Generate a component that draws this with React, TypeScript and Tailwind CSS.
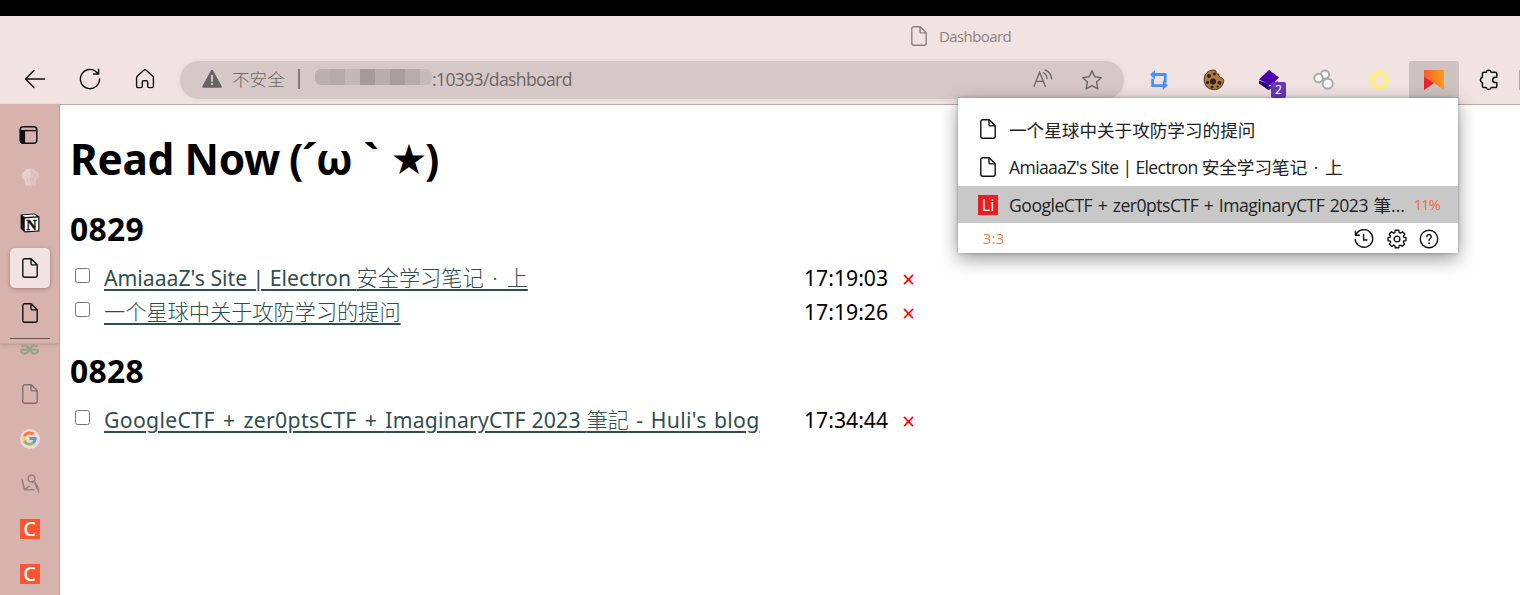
import React from "react";
import { FcGoogle } from "react-icons/fc";
import { SiGeeksforgeeks } from "react-icons/si";

const FONT = "font-['Noto_Sans','Noto_Sans_CJK_SC',sans-serif]";
const OPEN = "font-['Open_Sans','Noto_Sans_CJK_SC',sans-serif]";

function PageIcon({ className = "" }: { className?: string }) {
  return (
    <svg width="20" height="20" viewBox="0 0 20 20" fill="none" stroke="currentColor" strokeWidth="1.4" strokeLinejoin="round" className={className}>
      <path d="M4.5 0.8H11.2L17.2 6.8V17.2A2 2 0 0 1 15.2 19.2H4.8A2 2 0 0 1 2.8 17.2V2.6A1.8 1.8 0 0 1 4.5 0.8Z" />
      <path d="M11 0.9V5.6A1.3 1.3 0 0 0 12.3 6.9H17.1" />
    </svg>
  );
}

function Toolbar() {
  return (
    <div className="flex h-[43px] items-center">
      <div className="flex h-[38px] w-[180px] items-center pb-px text-[#111]">
        <svg width="22" height="20" viewBox="0 0 22 20" fill="none" stroke="currentColor" strokeWidth="1.4" strokeLinecap="round" strokeLinejoin="round" className="ml-6">
          <path d="M20.5 10H1.5M10 1.5L1.5 10L10 18.5" />
        </svg>
        <svg width="22" height="22" viewBox="0 0 22 22" fill="none" stroke="currentColor" strokeWidth="1.4" strokeLinecap="round" strokeLinejoin="round" className="ml-[33px]">
          <path d="M20.6 11A9.6 9.6 0 1 1 16.8 3.4L19.3 5.7M19.6 1.2V6H14.6" />
        </svg>
        <svg width="20" height="20" viewBox="0 0 20 20" fill="none" stroke="currentColor" strokeWidth="1.4" strokeLinejoin="round" className="ml-[34px]">
          <path d="M8.8 1.3a1.8 1.8 0 0 1 2.4 0L17.6 7A2.2 2.2 0 0 1 18.4 8.7V17A1.6 1.6 0 0 1 16.8 18.6H14A1.3 1.3 0 0 1 12.7 17.3V13A1.3 1.3 0 0 0 11.4 11.7H8.6A1.3 1.3 0 0 0 7.3 13V17.3A1.3 1.3 0 0 1 6 18.6H3.2A1.6 1.6 0 0 1 1.6 17V8.7A2.2 2.2 0 0 1 2.4 7Z" />
        </svg>
      </div>
      <div className="flex h-[38px] w-[944px] items-center rounded-full bg-[#d6c8c7] pb-[2px] text-[17.6px] leading-[36px] text-[#6a6665] shadow-[0_0_4px_rgba(120,80,80,0.12)]">
        <svg width="20" height="20" viewBox="0 0 20 20" className="ml-[22px]">
          <path d="M10 2L18.5 17.6H1.5Z" fill="#666464" stroke="#666464" strokeWidth="2.4" strokeLinejoin="round" />
          <path d="M10 6.5V12" stroke="#e6dad9" strokeWidth="1.7" strokeLinecap="round" />
          <circle cx="10" cy="15" r="1.1" fill="#e6dad9" />
        </svg>
        <span className="ml-[10px] w-[53px] font-light">不安全</span>
        <span className="ml-[13px] h-5 w-[2px] bg-[#827a79]" />
        <span className="ml-[15px] flex h-[16px] w-[117px] -translate-y-[2px] overflow-hidden rounded-[6px] opacity-90">
          <i className="w-[15px] bg-[#b9aeac]" />
          <i className="w-[15px] bg-[#b3a8a6]" />
          <i className="w-[15px] bg-[#c2b7b5]" />
          <i className="w-[15px] bg-[#a39795]" />
          <i className="w-[15px] bg-[#b8acab]" />
          <i className="w-[15px] bg-[#a59997]" />
          <i className="w-[15px] bg-[#b6abaa]" />
          <i className="w-[12px] bg-[#c6bbb9]" />
        </span>
        <span className={`w-[142px] whitespace-nowrap tracking-[-0.65px] ${OPEN}`}>:10393/dashboard</span>
        <svg width="20" height="20" viewBox="0 0 20 20" fill="none" stroke="currentColor" strokeWidth="1.3" strokeLinecap="round" className="ml-[459px]">
          <path d="M1 17.5L6.6 3.2L12.4 17.5M3 12.3H10.5M10.5 3.8A7 7 0 0 1 14 9.6M12 0.8A10.5 10.5 0 0 1 18.6 9.8" />
        </svg>
        <svg width="22" height="22" viewBox="0 0 22 22" fill="none" stroke="currentColor" strokeWidth="1.4" strokeLinejoin="round" className="ml-[28px] translate-y-px">
          <path d="M11 1.8L13.8 7.7L20.4 8.6L15.6 13.1L16.8 19.8L11 16.6L5.2 19.8L6.4 13.1L1.6 8.6L8.2 7.7Z" />
        </svg>
      </div>
      <Extensions />
    </div>
  );
}

function Extensions() {
  return (
    <div className="flex h-[38px] flex-1 items-center">
      <svg width="20" height="20" viewBox="0 0 20 20" className="ml-[25px]">
        <path d="M1 4.8L6 0V3H17.6V12.4H14.8V6H6V9.6ZM18.8 15.2L13.8 20V17H2.2V8.8H5V14.2H13.8V10.4Z" fill="#4592ff" />
      </svg>
      <svg width="22" height="22" viewBox="0 0 22 22" className="ml-[34px]">
        <path d="M8 1.4C10 .8 11.6 1 13 2C12.6 4 14 5.4 15.8 5.2C15.8 7.4 17 9 19 9C20.4 9.6 20.9 11 20.6 12.6C19.4 18 15.6 20.8 10.6 20.6C5 20.2 1.2 16.4 1.2 10.8C1.2 6 4 2.4 8 1.4Z" fill="#b3793c" stroke="#3b2d23" strokeWidth="1" />
        <g fill="#2f2420">
          <circle cx="10" cy="12.5" r="3" />
          <circle cx="6" cy="7" r="2" />
          <circle cx="11.4" cy="5" r="1.5" />
          <circle cx="16.5" cy="13.8" r="1.9" />
          <circle cx="4.6" cy="13.4" r="1.6" />
          <circle cx="9" cy="18" r="1.5" />
          <circle cx="14.6" cy="17.6" r="1.1" />
        </g>
      </svg>
      <div className="relative ml-[33px] h-[22px] w-[22px]">
        <svg width="22" height="22" viewBox="0 0 22 22">
          <path d="M1 12.5L12 17.5L21 11L11 21Z" fill="#2b0679" />
          <path d="M1 11.5V14.5L11 21.5V15Z" fill="#2b0679" />
          <path d="M11 1L21 8.6L13 16.4L1 10.6Z" fill="#4802ae" />
        </svg>
        <span className="absolute top-[13px] left-[13px] flex h-[16px] w-[15px] items-center justify-center rounded-[2px] bg-[#6936ba] text-[12px] leading-[16px] text-white">2</span>
      </div>
      <svg width="22" height="22" viewBox="0 0 22 22" className="ml-[33px]" fill="#f8f8f8" stroke="#aaa9a8" strokeWidth="1.9">
        <circle cx="12" cy="5.6" r="4.1" />
        <circle cx="5.5" cy="9" r="4.3" />
        <circle cx="14.8" cy="14.8" r="5" />
      </svg>
      <svg width="20" height="20" viewBox="0 0 20 20" className="ml-[34px]">
        <circle cx="10" cy="10" r="7.2" fill="none" stroke="#ffec8b" strokeWidth="5" />
      </svg>
      <div className="ml-5 flex h-[38px] w-[50px] items-center justify-center rounded-t-[3px] bg-[#cfc3c2]">
        <svg width="20" height="20" viewBox="0 0 20 20">
          <defs>
            <linearGradient id="mark">
              <stop offset="0" stopColor="#f15f2b" />
              <stop offset="1" stopColor="#fa9d1c" />
            </linearGradient>
          </defs>
          <path d="M0 0H20V20L10 13L0 20Z" fill="url(#mark)" />
          <path d="M0 7L10 13L0 20Z" fill="#ef2029" />
        </svg>
      </div>
      <svg width="22" height="22" viewBox="0 0 22 22" fill="none" stroke="#111" strokeWidth="1.5" strokeLinejoin="round" className="ml-[19px]">
        <path d="M6 3.2H8.2A2.6 2.6 0 0 1 13.2 3.2H17.2A1.6 1.6 0 0 1 18.8 4.8V8.2H17.4A2.7 2.7 0 0 0 17.4 13.6H18.8V17A1.6 1.6 0 0 1 17.2 18.6H13.2A2.6 2.6 0 0 1 8.2 18.6H6A1.6 1.6 0 0 1 4.4 17V13.6A2.8 2.8 0 0 1 4.4 8.2V4.8A1.6 1.6 0 0 1 6 3.2Z" />
      </svg>
      <span className="ml-auto h-5 w-px bg-[#b5a5a5]" />
    </div>
  );
}

function Cell({ children, className = "" }: { children: React.ReactNode; className?: string }) {
  return <div className={`flex h-[45px] shrink-0 items-center justify-center ${className}`}>{children}</div>;
}

function SquareC() {
  return <span className="flex h-5 w-5 items-center justify-center bg-[#fc5531] text-[20px] leading-[20px] font-medium text-white">C</span>;
}

function Sidebar() {
  return (
    <aside className="flex w-[60px] shrink-0 flex-col border-r border-[#c3a7a5] bg-[#d8b2ad]">
      <div className="flex h-[240px] flex-col border-b border-[#caa5a1] pt-[6px] shadow-[0_1px_3px_rgba(90,50,50,0.22)]">
        <Cell>
          <svg width="20" height="20" viewBox="0 0 20 20" fill="none" stroke="#111" strokeWidth="1.4" className="-translate-x-px translate-y-[2px]">
            <rect x="1.2" y="1.7" width="16.6" height="16.6" rx="3" />
            <path d="M1.5 5.6H17.5" />
            <path d="M1.5 5.6H5.4V18H4A2.5 2.5 0 0 1 1.5 15.5Z" fill="#111" />
          </svg>
        </Cell>
        <Cell>
          <svg width="20" height="20" viewBox="0 0 20 20" className="opacity-85">
            <path d="M4.8 11.8A4.4 4.4 0 0 1 4.2 3.6A6.5 6 0 0 1 15.6 3.4A4.4 4.4 0 0 1 16 11.8V17.5H4.8Z" fill="#e9d4d3" />
            <path d="M10.4 .8V17.5H16V11.8A4.4 4.4 0 0 0 15.6 3.4A6.5 6 0 0 0 10.4 .8Z" fill="#dfc4c4" />
            <path d="M7.8 10V14M10.4 10V14M13 10V14" stroke="#d3b3b2" strokeWidth=".8" />
          </svg>
        </Cell>
        <Cell>
          <svg width="20" height="20" viewBox="0 0 20 20">
            <path d="M.6 1.5L14.6 .5L19.4 3.6V18.6L4.6 19.6L.6 15.4Z" fill="#111" />
            <path d="M2.3 2.2L14.2 1.4L17 3.2L5 4.1Z" fill="#fff" />
            <path d="M4.8 5.4L18.2 4.5V17.5L4.8 18.3Z" fill="#fff" />
            <text x="11.5" y="16.5" textAnchor="middle" fontSize="14.5" fontWeight="700" fontFamily="Liberation Serif, serif" fill="#111" stroke="#111" strokeWidth=".4">N</text>
          </svg>
        </Cell>
        <Cell>
          <span className="flex h-10 w-10 shrink-0 items-center justify-center rounded-[5px] bg-[#f1e3e2] text-[#111] shadow-[0_1px_4px_rgba(90,50,50,0.4)]">
            <PageIcon />
          </span>
        </Cell>
        <Cell className="text-[#111]"><PageIcon /></Cell>
        <div className="mr-[9px] ml-[10px] mt-[3px] h-px bg-[#665655]" />
      </div>
      <div className="-mt-[1px] h-[252px] overflow-hidden">
        <div className="-mt-[17px] flex flex-col">
          <Cell><SiGeeksforgeeks size={19} color="#8fa587" stroke="#8fa587" strokeWidth="0.6" className="translate-y-px" /></Cell>
          <Cell className="text-[#84706e]"><PageIcon /></Cell>
          <Cell>
            <span className="flex h-5 w-5 items-center justify-center rounded-full bg-[#eddcda]">
              <FcGoogle size={17} className="opacity-65" />
            </span>
          </Cell>
          <Cell>
            <svg width="20" height="20" viewBox="0 0 20 20" fill="none" stroke="#967f7c" strokeLinejoin="round">
              <circle cx="11.5" cy="4.6" r="3.4" strokeWidth="1.4" />
              <path d="M2 5.5L4.6 15.8H14.5M4.8 15.5L9.5 12.2M14.2 6.8L11.8 9.3" strokeWidth="1.5" />
              <path d="M14.2 6.5L15.8 12.5L19 18.5L17.8 12Z" fill="#967f7c" strokeWidth=".8" />
            </svg>
          </Cell>
          <Cell><SquareC /></Cell>
          <Cell><SquareC /></Cell>
        </div>
      </div>
    </aside>
  );
}

function Row({ children, time }: { children: React.ReactNode; time: string }) {
  return (
    <li className="flex h-[34px] items-start text-[21.2px] leading-[34px] whitespace-nowrap">
      <input type="checkbox" className="mt-[7px] ml-[5px] h-[15px] w-[15px] appearance-none rounded-[2.5px] border border-[#767676] bg-white" />
      <span className="ml-[14px] w-[700px] text-[#2f4f4f]">
        <a className="underline decoration-2 underline-offset-[3px]">{children}</a>
      </span>
      <span className="w-[98px] text-black">{time}</span>
      <span className="text-[23px] leading-[36px] text-[#f00]">×</span>
    </li>
  );
}

function Dashboard() {
  return (
    <main className="flex-1 bg-white pt-[24px] pl-[10px] text-black">
      <h1 className="flex h-[60px] text-[42.4px] leading-[60px] font-bold whitespace-pre">
        <span className="w-[219px] tracking-[-0.35px]">Read Now </span>
        <span className="w-[13px]">(</span>
        <span className="w-[14px] tracking-[-2px]">´</span>
        <span className="w-[34px]">ω</span>
        <span className="w-[42px] text-center">`</span>
        <span className="w-[33px] text-[34px]">★</span>
        <span>)</span>
      </h1>
      <h2 className="mt-[18px] h-[44px] text-[31.8px] leading-[44px] font-bold tracking-[0.3px]">0829</h2>
      <ul className="mt-[10px]">
        <Row time="17:19:03">AmiaaaZ's Site | Electron <span className="font-light [word-spacing:3.4px]">安全学习笔记 · 上</span></Row>
        <Row time="17:19:26"><span className="font-light">一个星球中关于攻防学习的提问</span></Row>
      </ul>
      <h2 className="mt-5 h-[44px] text-[31.8px] leading-[44px] font-bold tracking-[0.3px]">0828</h2>
      <ul className="mt-[10px]">
        <Row time="17:34:44">
          <span className="tracking-[0.35px] [word-spacing:2.2px]">GoogleCTF + zer0ptsCTF + </span>
          <span className="tracking-[0.2px]">ImaginaryCTF 2023 </span>
          <span className="font-light">筆記</span>
          <span className="tracking-[0.3px] [word-spacing:1.6px]"> - Huli's blog</span>
        </Row>
      </ul>
    </main>
  );
}

function Popup() {
  return (
    <div className={`absolute top-[98px] left-[958px] h-[155px] w-[500px] bg-white pt-[13px] text-[17.6px] text-[#222] shadow-[0_6px_18px_rgba(0,0,0,0.4),0_0_3px_rgba(0,0,0,0.3)] ${OPEN}`}>
      <div className="flex h-[37px] items-center pl-5 leading-[37px] whitespace-nowrap">
        <PageIcon className="-translate-y-px text-[#111]" />
        <span className="ml-[11px] translate-y-px">一个星球中关于攻防学习的提问</span>
      </div>
      <div className="flex h-[38px] items-center pl-5 leading-[38px] whitespace-nowrap">
        <PageIcon className="text-[#111]" />
        <span className="ml-[11px]"><span className="tracking-[-0.63px]">AmiaaaZ's Site | Electron </span><span className="[word-spacing:2px]">安全学习笔记 · 上</span></span>
      </div>
      <div className="flex h-[37px] items-center bg-[#c8c8c8] pl-5 leading-[37px] whitespace-nowrap">
        <span className="flex h-5 w-5 items-center justify-center bg-[#ed1c24] text-[16px] leading-5 text-white">Li</span>
        <span className="ml-[11px] w-[405px] translate-y-px"><span className="tracking-[-0.5px] [word-spacing:1.4px]">GoogleCTF + zer0ptsCTF + ImaginaryCTF 2023 </span>筆...</span>
        <span className="text-[14.4px] tracking-[-0.9px] text-[#ef6c3b]">11%</span>
      </div>
      <div className="flex h-[30px] items-center pt-[2px] pr-[19px] pl-[25px] text-[#111]">
        <span className="mr-auto text-[14.4px] leading-[28px] tracking-[0.5px] text-[#f08040]">3:3</span>
        <svg width="20" height="20" viewBox="0 0 20 20" fill="none" stroke="currentColor" strokeWidth="1.4" strokeLinecap="round" strokeLinejoin="round">
          <path d="M2 5.6A8.8 8.8 0 1 1 1.2 10.6M1.4 2.2V6.2H5.4M9.6 5.4V11H13" />
        </svg>
        <svg width="20" height="20" viewBox="0 0 20 20" fill="none" stroke="currentColor" strokeWidth="1.4" strokeLinejoin="round" className="ml-[13px]">
          <circle cx="10" cy="10" r="2.9" />
          <path d="M8.3 1.2H11.7L12.2 3.6L13.4 4.1L15.5 2.8L17.8 5.1L16.4 7.1L16.9 8.3L19 8.6V11.6L16.8 12L16.3 13.2L17.6 15.1L15.3 17.4L13.4 16.1L12.2 16.6L11.7 18.8H8.3L7.8 16.6L6.6 16.1L4.7 17.4L2.4 15.1L3.7 13.2L3.2 12L1 11.6V8.6L3.1 8.3L3.6 7.1L2.2 5.1L4.5 2.8L6.6 4.1L7.8 3.6Z" />
        </svg>
        <svg width="20" height="20" viewBox="0 0 20 20" fill="none" stroke="currentColor" strokeWidth="1.4" strokeLinecap="round" className="ml-3">
          <circle cx="10" cy="10" r="8.7" />
          <path d="M7.8 7.7A2.2 2.2 0 1 1 11.2 9.5C10.3 10.2 10 10.6 10 11.6" />
          <circle cx="10" cy="14.2" r=".5" fill="currentColor" strokeWidth=".9" />
        </svg>
      </div>
    </div>
  );
}

export default function App() {
  return (
    <div className={`relative flex h-[595px] w-[1520px] flex-col overflow-hidden bg-white ${FONT}`}>
      <div className="h-4 shrink-0 bg-black" />
      <header className="flex h-[88px] shrink-0 flex-col bg-[#f1e3e2]">
        <div className="flex h-[42px] items-center pb-[3px] text-[#8b8180]">
          <PageIcon className="ml-[909px]" />
          <span className={`ml-[10px] translate-y-px text-[15px] tracking-[-0.6px] ${OPEN}`}>Dashboard</span>
        </div>
        <Toolbar />
      </header>
      <div className="flex flex-1">
        <Sidebar />
        <div className="flex flex-1 border-t border-[#b9a9a9]">
          <Dashboard />
        </div>
      </div>
      <Popup />
    </div>
  );
}
